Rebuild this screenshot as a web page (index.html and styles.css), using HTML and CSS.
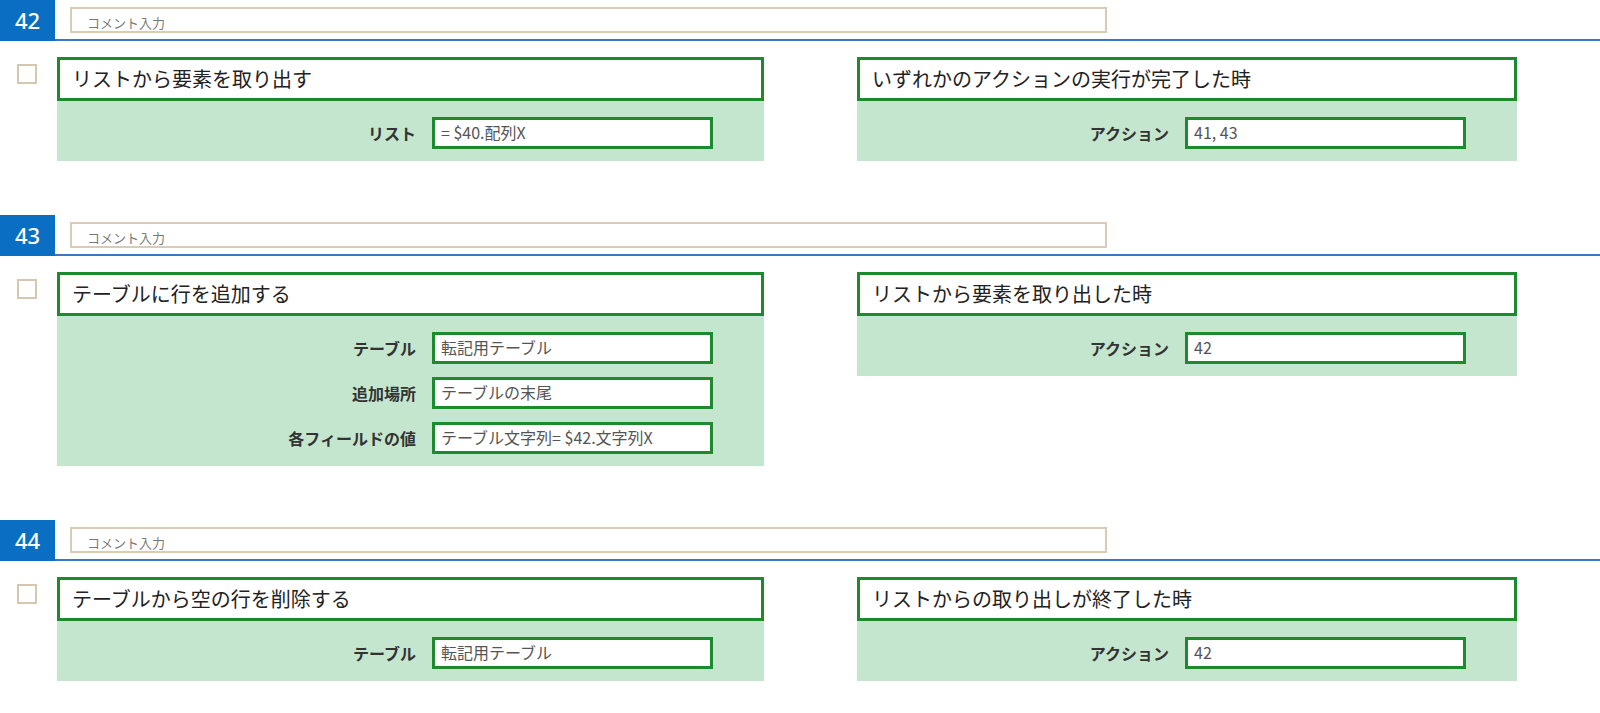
FILE: index.html
```html
<!DOCTYPE html>
<html lang="ja">
<head>
<meta charset="utf-8">
<title>Flow</title>
<link rel="stylesheet" href="styles.css">
</head>
<body>
<section class="step">
  <div class="step-head">
    <div class="badge">42</div>
    <div class="head-rest"><div class="comment">コメント入力</div></div>
  </div>
  <div class="step-body">
    <div class="check"></div>
    <div class="card card-left">
      <div class="card-title">リストから要素を取り出す</div>
      <div class="params">
        <div class="param"><span class="label">リスト</span><div class="value">= $40.配列X</div></div>
      </div>
    </div>
    <div class="card card-right">
      <div class="card-title">いずれかのアクションの実行が完了した時</div>
      <div class="params">
        <div class="param"><span class="label">アクション</span><div class="value">41, 43</div></div>
      </div>
    </div>
  </div>
</section>

<section class="step">
  <div class="step-head">
    <div class="badge">43</div>
    <div class="head-rest"><div class="comment">コメント入力</div></div>
  </div>
  <div class="step-body">
    <div class="check"></div>
    <div class="card card-left">
      <div class="card-title">テーブルに行を追加する</div>
      <div class="params">
        <div class="param"><span class="label">テーブル</span><div class="value">転記用テーブル</div></div>
        <div class="param"><span class="label">追加場所</span><div class="value">テーブルの末尾</div></div>
        <div class="param"><span class="label">各フィールドの値</span><div class="value">テーブル文字列= $42.文字列X</div></div>
      </div>
    </div>
    <div class="card card-right">
      <div class="card-title">リストから要素を取り出した時</div>
      <div class="params">
        <div class="param"><span class="label">アクション</span><div class="value">42</div></div>
      </div>
    </div>
  </div>
</section>

<section class="step">
  <div class="step-head">
    <div class="badge">44</div>
    <div class="head-rest"><div class="comment">コメント入力</div></div>
  </div>
  <div class="step-body">
    <div class="check"></div>
    <div class="card card-left">
      <div class="card-title">テーブルから空の行を削除する</div>
      <div class="params">
        <div class="param"><span class="label">テーブル</span><div class="value">転記用テーブル</div></div>
      </div>
    </div>
    <div class="card card-right">
      <div class="card-title">リストからの取り出しが終了した時</div>
      <div class="params">
        <div class="param"><span class="label">アクション</span><div class="value">42</div></div>
      </div>
    </div>
  </div>
</section>
</body>
</html>
```

FILE: styles.css
```css
* { box-sizing: border-box; }

html, body {
  overflow: hidden;
}

body {
  margin: 0;
  background: #ffffff;
  font-family: "Noto Sans CJK JP", "Noto Sans", sans-serif;
  color: #222222;
}

.step {
  margin-bottom: 54px;
}

.step:last-child {
  margin-bottom: 0;
}

.step-head {
  display: flex;
  height: 41px;
}

.badge {
  width: 55px;
  height: 41px;
  background: #0a6fc2;
  color: #ffffff;
  font-family: "Noto Sans", "Noto Sans CJK JP", sans-serif;
  font-size: 22px;
  font-weight: 500;
  line-height: 41px;
  text-align: center;
}

.head-rest {
  flex: 1;
  border-bottom: 2px solid #3f74c6;
  padding: 7px 0 0 15px;
}

.comment {
  width: 1037px;
  height: 26px;
  border: 2px solid #dacbb6;
  padding-left: 15px;
  font-size: 13px;
  line-height: 28px;
  color: #7a7a7a;
}

.step-body {
  display: flex;
  align-items: flex-start;
  padding-top: 16px;
}

.check {
  width: 20px;
  height: 20px;
  margin: 7px 0 0 17px;
  border: 2px solid #d6c7b2;
  background: #ffffff;
}

.card-left {
  width: 707px;
  margin-left: 20px;
}

.card-right {
  width: 660px;
  margin-left: 93px;
}

.card-title {
  height: 44px;
  border: 3px solid #1e8a2e;
  background: #ffffff;
  padding-left: 12px;
  font-size: 20px;
  line-height: 37px;
  color: #222222;
}

.params {
  background: #c4e6cf;
  padding: 16px 51px 12px 0;
  display: flex;
  flex-direction: column;
  gap: 13px;
}

.param {
  display: flex;
  justify-content: flex-end;
  align-items: center;
  gap: 16px;
}

.label {
  font-size: 16px;
  font-weight: 700;
  color: #333333;
}

.value {
  width: 281px;
  height: 32px;
  border: 3px solid #1e8a2e;
  background: #ffffff;
  padding-left: 6px;
  font-size: 16px;
  line-height: 25px;
  color: #555555;
  white-space: nowrap;
  overflow: hidden;
}
```
